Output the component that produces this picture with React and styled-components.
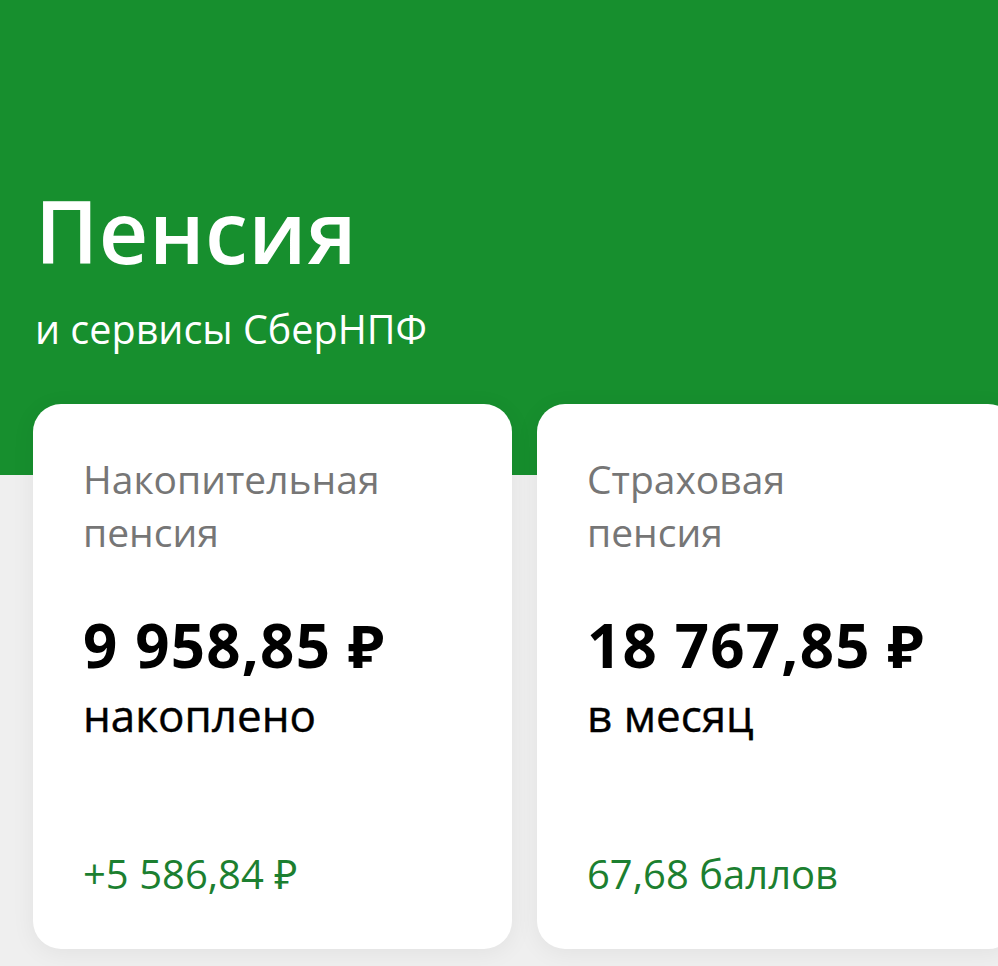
import React from "react";
import styled, { createGlobalStyle } from "styled-components";

const GlobalStyle = createGlobalStyle`
  html, body {
    margin: 0;
    padding: 0;
    background: #efefef;
    font-family: "Open Sans", "Noto Sans", sans-serif;
  }
`;

const cards = [
  {
    title: ["Накопительная", "пенсия"],
    amount: "9 958,85 ₽",
    caption: "накоплено",
    extra: "+5 586,84 ₽",
  },
  {
    title: ["Страховая", "пенсия"],
    amount: "18 767,85 ₽",
    caption: "в месяц",
    extra: "67,68 баллов",
  },
];

export default function App() {
  return (
    <Page>
      <GlobalStyle />
      <Header>
        <Title>Пенсия</Title>
        <Subtitle>и сервисы СберНПФ</Subtitle>
      </Header>
      <CardsRow>
        {cards.map((c) => (
          <Card key={c.amount}>
            <CardLabel>
              {c.title[0]}
              <br />
              {c.title[1]}
            </CardLabel>
            <Amount>{c.amount}</Amount>
            <Caption>{c.caption}</Caption>
            <Extra>{c.extra}</Extra>
          </Card>
        ))}
      </CardsRow>
    </Page>
  );
}

const Page = styled.div`
  width: 998px;
  height: 966px;
  overflow: hidden;
  background: linear-gradient(#178f2e 0, #178f2e 475px, #efefef 475px);
`;

const Header = styled.header`
  padding: 176px 0 0 35px;
  color: #fff;
`;

const Title = styled.h1`
  margin: 0;
  font-size: 86px;
  font-weight: 600;
  line-height: 110px;
  letter-spacing: 0.5px;
`;

const Subtitle = styled.p`
  margin: 0;
  margin-top: 18px;
  font-size: 39.5px;
  line-height: 50px;
`;

const CardsRow = styled.div`
  display: flex;
  gap: 25px;
  padding: 0 0 0 33px;
  margin-top: 50px;
`;

const Card = styled.div`
  flex: 0 0 479px;
  height: 545px;
  box-sizing: border-box;
  background: #fff;
  border-radius: 28px;
  padding: 48px 50px 0;
  box-shadow: 0 4px 24px rgba(0, 0, 0, 0.06);
  display: flex;
  flex-direction: column;
`;

const CardLabel = styled.div`
  color: #767676;
  font-size: 39px;
  line-height: 53px;
`;

const Amount = styled.div`
  margin-top: 52px;
  color: #000;
  font-size: 60px;
  font-weight: 700;
  line-height: 70px;
  letter-spacing: 1.2px;
`;

const Caption = styled.div`
  color: #000;
  font-size: 44px;
  line-height: 70px;
  -webkit-text-stroke: 0.4px #000;
`;

const Extra = styled.div`
  margin-top: auto;
  margin-bottom: 50px;
  color: #1c7f30;
  font-size: 40px;
  line-height: 50px;
`;
